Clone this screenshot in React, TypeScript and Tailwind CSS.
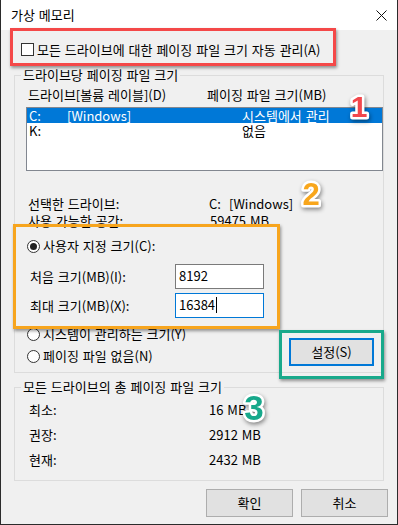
import * as React from "react";

function CheckBox() {
  return <span className="h-[13px] w-[13px] shrink-0 border border-[#333] bg-white" />;
}

function Radio({ checked, label }: { checked?: boolean; label: string }) {
  return (
    <div className="flex h-[16px] items-center">
      <span className="flex h-[13px] w-[13px] shrink-0 items-center justify-center rounded-full border border-[#333] bg-white">
        {checked && <span className="h-[7px] w-[7px] rounded-full bg-[#222]" />}
      </span>
      <span className="ml-[3px]">{label}</span>
    </div>
  );
}

function Badge({
  ch,
  color,
  cx,
  top,
  size,
}: {
  ch: string;
  color: string;
  cx: number;
  top: number;
  size: number;
}) {
  // annotation digits drawn over the dialog
  return (
    <svg
      width={40}
      height={size + 8}
      className="pointer-events-none absolute [filter:drop-shadow(1px_2px_2px_rgba(0,0,0,0.45))]"
      style={{ left: cx - 20, top }}
    >
      <text
        x={20}
        y={size * 0.86}
        textAnchor="middle"
        fontFamily="'Liberation Sans', Arial, sans-serif"
        fontWeight={700}
        fontSize={size}
        fill={color}
        stroke="#fff"
        strokeWidth={5}
        strokeLinejoin="round"
        paintOrder="stroke"
      >
        {ch}
      </text>
    </svg>
  );
}

export default function App() {
  return (
    <div className="relative flex h-[525px] w-[398px] flex-col overflow-hidden border-x border-b border-[#2b2b2b] bg-[#f0f0f0] text-[13px] leading-[16px] text-black [word-spacing:1px] [font-family:'Noto_Sans_CJK_KR','Noto_Sans',sans-serif]">
      {/* title bar */}
      <div className="flex h-[30px] shrink-0 items-center justify-between bg-white px-[10px]">
        <span>가상 메모리</span>
        <svg width="11" height="11" viewBox="0 0 11 11">
          <path d="M0.5 0.5L10.5 10.5M10.5 0.5L0.5 10.5" stroke="#111" strokeWidth="1" />
        </svg>
      </div>

      <div className="flex flex-col px-[13px]">
        <label className="mt-[13px] flex h-[13px] items-center pl-[7px]">
          <CheckBox />
          <span className="ml-[3px]">모든 드라이브에 대한 페이징 파일 크기 자동 관리(A)</span>
        </label>

        <fieldset className="mt-[11px] border border-[#dcdcdc] pb-[6px]">
          <legend className="ml-[6px] px-[2px] leading-[16px]">드라이브당 페이징 파일 크기</legend>
          <div className="mt-[4px] flex h-[16px] pl-[13px]">
            <span className="w-[179px]">드라이브[볼륨 레이블](D)</span>
            <span>페이징 파일 크기(MB)</span>
          </div>
          <div className="ml-[11px] mt-[4px] h-[64px] border border-[#828790] bg-white">
            <div className="grid h-[15px] grid-cols-[38px_175px_1fr] bg-[#0078d7] pl-[2px] leading-[15px] text-white">
              <span>C:</span>
              <span>[Windows]</span>
              <span>시스템에서 관리</span>
            </div>
            <div className="grid h-[15px] grid-cols-[38px_175px_1fr] pl-[2px] leading-[15px]">
              <span>K:</span>
              <span />
              <span>없음</span>
            </div>
          </div>

          <div className="mt-[24px] flex h-[17px] items-center pl-[13px]">
            <span className="w-[181px]">선택한 드라이브:</span>
            <span className="w-[20px]">C:</span>
            <span>[Windows]</span>
          </div>
          <div className="flex h-[17px] items-center pl-[13px]">
            <span className="w-[182px]">사용 가능한 공간:</span>
            <span>59475 MB</span>
          </div>

          <div className="mt-[9px] pl-[12px]">
            <Radio checked label="사용자 지정 크기(C):" />
          </div>
          <div className="mt-[10px] flex h-[25px] items-center pl-[15px]">
            <span className="w-[145px]">처음 크기(MB)(I):</span>
            <div className="flex h-[25px] w-[89px] items-center border border-[#7a7a7a] bg-white pb-[2px] pl-[3px]">
              8192
            </div>
          </div>
          <div className="mt-[4px] flex h-[25px] items-center pl-[15px]">
            <span className="w-[145px]">최대 크기(MB)(X):</span>
            <div className="flex h-[25px] w-[89px] items-center border border-[#0078d7] bg-white pb-[2px] pl-[3px]">
              16384
              <span className="ml-[1px] h-[16px] w-[1px] bg-black" />
            </div>
          </div>

          <div className="flex items-start justify-between">
            <div className="mt-[8px] flex flex-col gap-[6px] pl-[12px]">
              <Radio label="시스템이 관리하는 크기(Y)" />
              <Radio label="페이징 파일 없음(N)" />
            </div>
            <button
              type="button"
              className="mr-[9px] mt-[20px] flex h-[28px] w-[85px] items-center justify-center border-2 border-[#0078d7] bg-[#e1e1e1]"
            >
              설정(S)
            </button>
          </div>
        </fieldset>

        <fieldset className="mt-[6px] border border-[#dcdcdc] pb-[8px]">
          <legend className="ml-[6px] px-[2px] leading-[16px]">모든 드라이브의 총 페이징 파일 크기</legend>
          <div className="mt-[2px] flex flex-col">
            {[
              ["최소:", "16 MB"],
              ["권장:", "2912 MB"],
              ["현재:", "2432 MB"],
            ].map(([k, v]) => (
              <div key={k} className="flex h-[25px] items-center pl-[14px]">
                <span className="w-[180px]">{k}</span>
                <span>{v}</span>
              </div>
            ))}
          </div>
        </fieldset>
      </div>

      <div className="mt-[8px] flex justify-end gap-[8px] pr-[9px]">
        <button type="button" className="flex h-[28px] w-[87px] items-center justify-center border border-[#adadad] bg-[#e1e1e1]">
          확인
        </button>
        <button type="button" className="flex h-[28px] w-[87px] items-center justify-center border border-[#adadad] bg-[#e1e1e1]">
          취소
        </button>
      </div>

      {/* annotation frames */}
      <div className="pointer-events-none absolute left-[9px] top-[28px] h-[38px] w-[326px] border-[3px] border-[#f44848] shadow-[1px_2px_3px_rgba(0,0,0,0.4)]" />
      <div className="pointer-events-none absolute left-[12px] top-[224px] h-[105px] w-[267px] border-[3px] border-[#f7a51e] shadow-[1px_2px_3px_rgba(0,0,0,0.4)]" />
      <div className="pointer-events-none absolute left-[278px] top-[330px] h-[49px] w-[105px] border-[3px] border-[#19a98b] shadow-[1px_2px_3px_rgba(0,0,0,0.4)]" />

      <Badge ch="1" color="#f2474c" cx={357.5} top={91} size={30} />
      <Badge ch="2" color="#f8a61c" cx={310} top={178} size={31} />
      <Badge ch="3" color="#17a88b" cx={252.5} top={390} size={35} />
    </div>
  );
}
